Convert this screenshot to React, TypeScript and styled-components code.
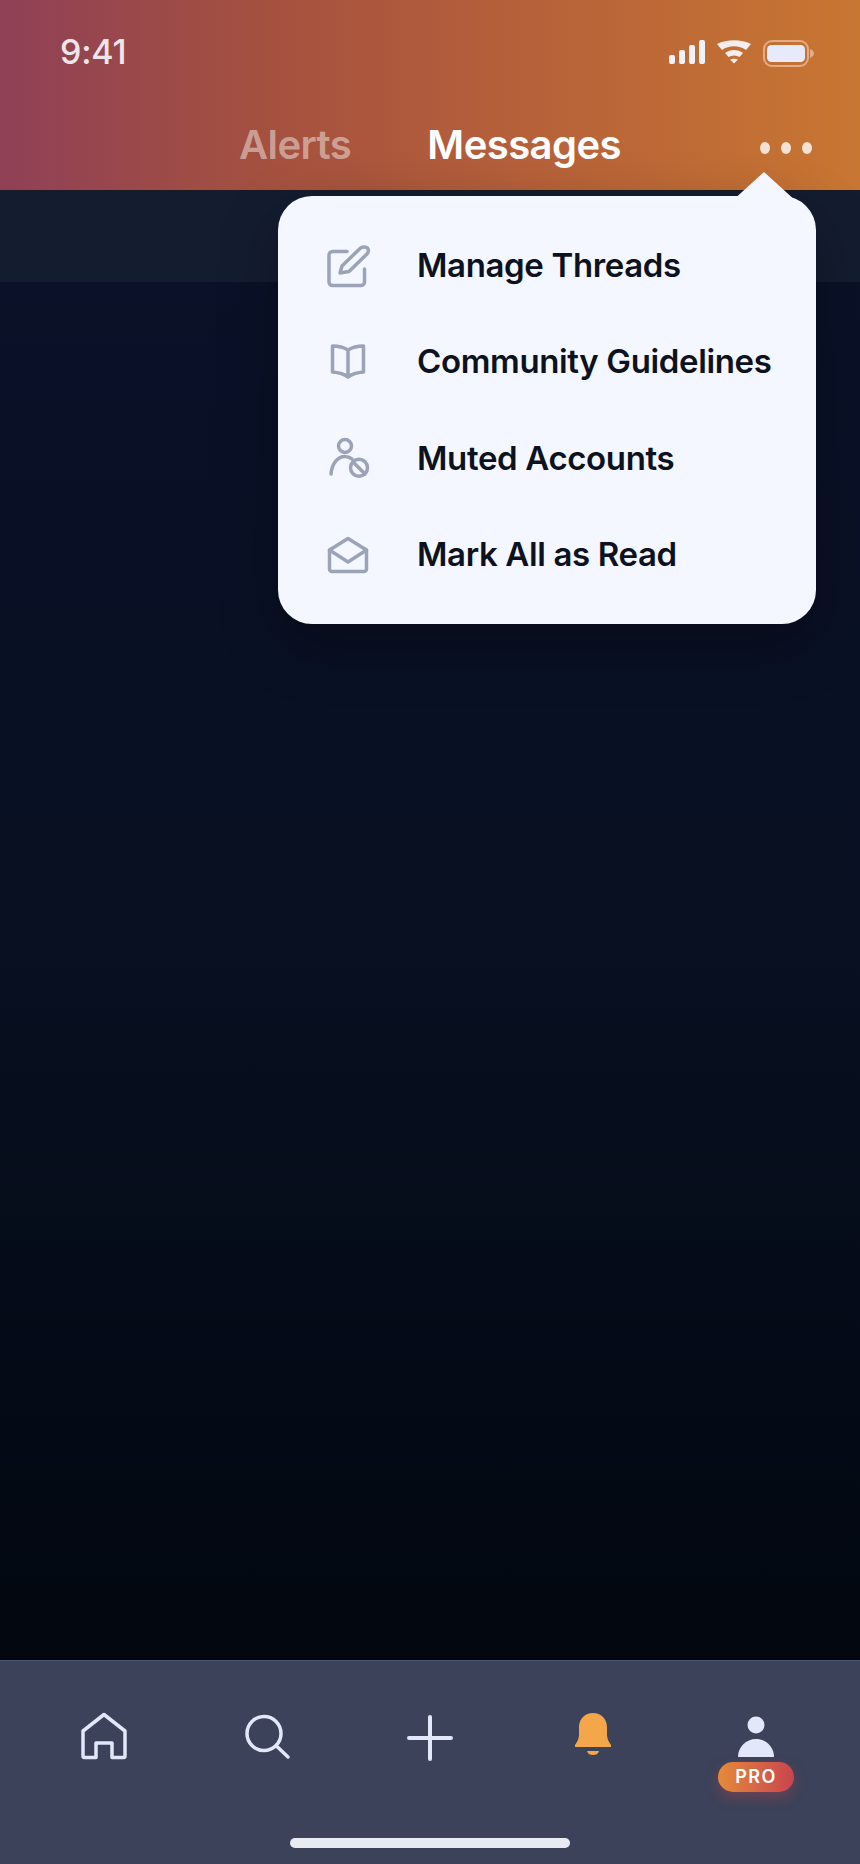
import React from "react";
import styled, { createGlobalStyle } from "styled-components";

const Global = createGlobalStyle`
  html, body { margin: 0; padding: 0; background: #02060f; }
  #root { width: 860px; height: 1864px; }
`;

const Page = styled.div`
  position: relative;
  width: 860px;
  height: 1864px;
  display: flex;
  flex-direction: column;
  overflow: hidden;
  font-family: Inter, "Liberation Sans", sans-serif;
`;

const Header = styled.header`
  height: 191px;
  flex: none;
  box-sizing: border-box;
  border-bottom: 1px solid #1a1a24;
  background: linear-gradient(90deg, #8f4056 0%, #a45040 30%, #b6603a 60%, #c87632 100%);
  display: flex;
  flex-direction: column;
`;

const StatusBar = styled.div`
  height: 123px;
  flex: none;
  box-sizing: border-box;
  padding: 32px 45px 0 60px;
  display: flex;
  justify-content: space-between;
  align-items: flex-start;
`;

const Clock = styled.span`
  font-size: 34px;
  line-height: 40px;
  font-weight: 500;
  letter-spacing: -0.2px;
  color: #efe6ec;
`;

const StatusIcons = styled.div`
  display: flex;
  align-items: flex-start;
  gap: 12px;
  padding-top: 8px;
`;

const Tabs = styled.nav`
  position: relative;
  display: flex;
  justify-content: center;
  gap: 76px;
`;

const Tab = styled.span<{ $active?: boolean }>`
  font-size: 40px;
  line-height: 44px;
  font-weight: 600;
  letter-spacing: -0.55px;
  color: ${(p) => (p.$active ? "#ffffff" : "rgba(255,255,255,0.45)")};
`;

const Dots = styled.div`
  position: absolute;
  right: 48px;
  top: 19px;
  display: flex;
  gap: 11px;
`;

const Dot = styled.i`
  display: block;
  width: 10px;
  height: 12px;
  border-radius: 50%;
  background: #f4e2d4;
`;

const Band = styled.div`
  height: 91px;
  flex: none;
  background: #141c30;
`;

const Body = styled.main`
  flex: 1;
  background: linear-gradient(180deg, #0a1128 0%, #081022 45%, #02070f 100%);
`;

const Popup = styled.div`
  position: absolute;
  left: 278px;
  top: 196px;
  width: 538px;
  height: 428px;
  box-sizing: border-box;
  padding: 21px 0;
  border-radius: 34px;
  background: #f4f7ff;
  box-shadow: 0 20px 60px rgba(0, 0, 0, 0.3);
  display: flex;
  flex-direction: column;
`;

const Arrow = styled.div`
  position: absolute;
  left: 453px;
  top: -24px;
  width: 66px;
  height: 30px;
  background: #f4f7ff;
  clip-path: polygon(50% 0, 100% 100%, 0 100%);
`;

const Item = styled.div`
  height: 96.3px;
  flex: none;
  display: flex;
  align-items: center;
  padding-left: 48px;
  gap: 45px;
`;

const ItemIcon = styled.svg`
  width: 46px;
  height: 46px;
  flex: none;
  fill: none;
  stroke: #9aa3b8;
  stroke-width: 3.5;
  stroke-linecap: round;
  stroke-linejoin: round;
`;

const ItemLabel = styled.span`
  font-size: 33px;
  font-weight: 600;
  letter-spacing: -0.36px;
  color: #0d1220;
  white-space: nowrap;
`;

const TabBar = styled.footer`
  position: relative;
  height: 204px;
  flex: none;
  box-sizing: border-box;
  border-top: 1px solid #4b5470;
  background: #3b4259;
  display: grid;
  grid-template-columns: repeat(5, 163px);
  padding: 44px 22.5px 0;
  align-items: start;
  justify-items: center;
`;

const NavIcon = styled.svg<{ $heavy?: boolean }>`
  width: 56px;
  height: 56px;
  fill: none;
  stroke: #e2e8fa;
  stroke-width: ${(p) => (p.$heavy ? 4 : 3.5)};
  stroke-linecap: round;
  stroke-linejoin: round;
`;

const ProfileCell = styled.div`
  position: relative;
  width: 76px;
  height: 87px;
  display: flex;
  justify-content: center;
`;

const Pro = styled.span`
  position: absolute;
  left: 0;
  top: 57px;
  width: 76px;
  height: 30px;
  border-radius: 15px;
  background: linear-gradient(90deg, #e58a3a 0%, #c9444f 100%);
  box-shadow: 0 6px 14px rgba(201, 68, 79, 0.35);
  color: #fff;
  font-size: 18px;
  font-weight: 600;
  letter-spacing: 1.4px;
  line-height: 30px;
  text-align: center;
`;

const HomeIndicator = styled.div`
  position: absolute;
  left: 290px;
  bottom: 16px;
  width: 280px;
  height: 10px;
  border-radius: 5px;
  background: #e9ebf3;
`;

export default function App() {
  return (
    <Page>
      <Global />
      <Header>
        <StatusBar>
          <Clock>9:41</Clock>
          <StatusIcons>
            <svg width="36" height="24" viewBox="0 0 36 24" fill="#f1f3fb">
              <rect x="0" y="15" width="6" height="9" rx="2" />
              <rect x="10" y="10" width="6" height="14" rx="2" />
              <rect x="20" y="5" width="6" height="19" rx="2" />
              <rect x="30" y="0" width="6" height="24" rx="2" />
            </svg>
            <svg width="34" height="24" viewBox="0 0 34 24" fill="#f4eeee">
              <path d="M0 4C10 -1 24 -1 34 4L29 10C22 5 12 5 5 10Z" />
              <path d="M8 13C13 9 21 9 26 13L22.5 17C19 15 15 15 11.5 17Z" />
              <path d="M13 19.5C15 18.5 19 18.5 21 19.5L17 23.5Z" />
            </svg>
            <svg width="52" height="27" viewBox="0 0 52 27">
              <rect x="1" y="1" width="44" height="25" rx="8" fill="none" stroke="#e5ab85" strokeWidth="2" />
              <rect x="4" y="5" width="38" height="17" rx="4.5" fill="#e6eafa" />
              <path d="M47 9C50 10 51 12 51 13.5C51 15 50 17 47 18Z" fill="#e5ab85" />
            </svg>
          </StatusIcons>
        </StatusBar>
        <Tabs>
          <Tab>Alerts</Tab>
          <Tab $active>Messages</Tab>
          <Dots>
            <Dot />
            <Dot />
            <Dot />
          </Dots>
        </Tabs>
      </Header>
      <Band />
      <Body />
      <TabBar>
        <NavIcon viewBox="0 0 56 56">
          <path d="M7 26L28 9.5L49 26V51A1.5 1.5 0 0 1 47.5 52.5H36V38H20V52.5H8.5A1.5 1.5 0 0 1 7 51Z" />
        </NavIcon>
        <NavIcon viewBox="0 0 56 56">
          <circle cx="25" cy="28.5" r="17" />
          <path d="M38.5 42L49 52" />
        </NavIcon>
        <NavIcon viewBox="0 0 56 56" $heavy>
          <path d="M28 12V54M7 33H49" />
        </NavIcon>
        <NavIcon viewBox="0 0 56 56">
          <path
            d="M28 8C20 8 14 14 14 22V30C14 34 12 37 10 40V42H46V40C44 37 42 34 42 30V22C42 14 36 8 28 8Z"
            fill="#f4a64a"
            stroke="none"
          />
          <path d="M22 46H34C33 49 31 50 28 50C25 50 23 49 22 46Z" fill="#f4a64a" stroke="none" />
        </NavIcon>
        <ProfileCell>
          <svg width="40" height="52" viewBox="0 0 40 52" fill="#e2e8fa">
            <circle cx="20" cy="20" r="8.5" />
            <path d="M2 52C2 42 10 34 20 34C30 34 38 42 38 52Z" />
          </svg>
          <Pro>PRO</Pro>
        </ProfileCell>
        <HomeIndicator />
      </TabBar>
      <Popup>
        <Arrow />
        <Item>
          <ItemIcon viewBox="0 0 46 46">
            <path d="M21 9.5H6.5A3.5 3.5 0 0 0 3 13V40A3.5 3.5 0 0 0 6.5 43.5H35A3.5 3.5 0 0 0 38.5 40V27" />
            <path d="M14 31L16 24L34 6.5C36 4.5 40 4.5 41.5 6C43 8 42.5 10 41 12L23 29.5Z" />
          </ItemIcon>
          <ItemLabel>Manage Threads</ItemLabel>
        </Item>
        <Item>
          <ItemIcon viewBox="0 0 46 46">
            <path d="M22 12C18 9.5 12 8 6.5 8V34C12 34.5 18 36 22 39C26 36 32 34.5 37.5 34V8C32 8 26 9.5 22 12ZM22 12V39" />
          </ItemIcon>
          <ItemLabel>Community Guidelines</ItemLabel>
        </Item>
        <Item>
          <ItemIcon viewBox="0 0 46 46">
            <circle cx="19" cy="11" r="6.5" />
            <path d="M5 39C6 28 12 21.5 19 21.5C22 21.5 24 22.5 26 24" />
            <circle cx="33" cy="32.7" r="8.5" />
            <path d="M27 27L39 39" />
          </ItemIcon>
          <ItemLabel>Muted Accounts</ItemLabel>
        </Item>
        <Item>
          <ItemIcon viewBox="0 0 46 46">
            <path d="M3.5 19L22 7.5L40.5 19V38A2.5 2.5 0 0 1 38 40.5H6A2.5 2.5 0 0 1 3.5 38Z" />
            <path d="M3.5 19L22 31L40.5 19" />
          </ItemIcon>
          <ItemLabel>Mark All as Read</ItemLabel>
        </Item>
      </Popup>
    </Page>
  );
}
